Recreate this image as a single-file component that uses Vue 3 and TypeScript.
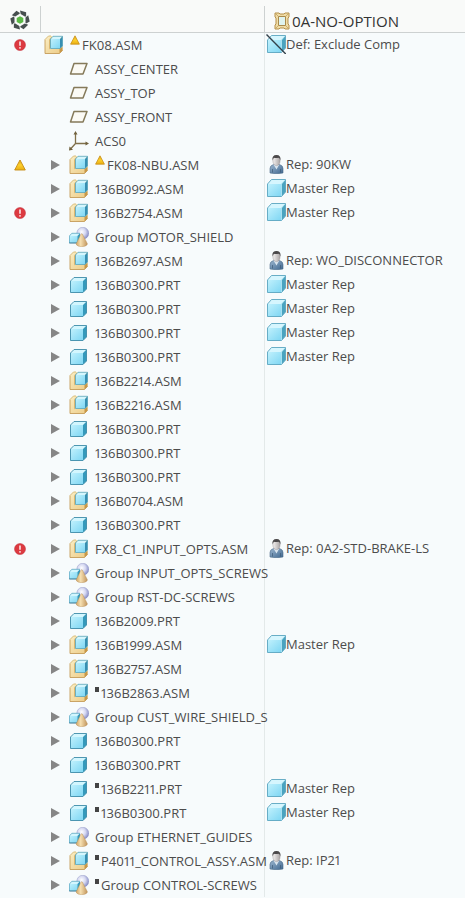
<script setup lang="ts">
import { reactive } from 'vue'

type Kind = 'asm' | 'part' | 'group' | 'plane' | 'csys'
type Status = 'error' | 'warning'
type Mark = 'warning' | 'square'
type RepKind = 'master' | 'user' | 'exclude'

interface Rep {
  kind: RepKind
  label: string
}

interface Item {
  id: number
  kind: Kind
  name: string
  root: boolean
  expandable: boolean
  open: boolean
  status?: Status
  mark?: Mark
  rep?: Rep
}

let nextId = 0
function item(kind: Kind, name: string, extra: Partial<Item> = {}): Item {
  const expandable = kind !== 'plane' && kind !== 'csys'
  return { id: nextId++, kind, name, root: false, expandable, open: false, ...extra }
}

const master: Rep = { kind: 'master', label: 'Master Rep' }
const user = (label: string): Rep => ({ kind: 'user', label: `Rep: ${label}` })

const items = reactive<Item[]>([
  item('asm', 'FK08.ASM', {
    root: true,
    expandable: false,
    status: 'error',
    mark: 'warning',
    rep: { kind: 'exclude', label: 'Def: Exclude Comp' },
  }),
  item('plane', 'ASSY_CENTER'),
  item('plane', 'ASSY_TOP'),
  item('plane', 'ASSY_FRONT'),
  item('csys', 'ACS0'),
  item('asm', 'FK08-NBU.ASM', { status: 'warning', mark: 'warning', rep: user('90KW') }),
  item('asm', '136B0992.ASM', { rep: master }),
  item('asm', '136B2754.ASM', { status: 'error', rep: master }),
  item('group', 'Group MOTOR_SHIELD'),
  item('asm', '136B2697.ASM', { rep: user('WO_DISCONNECTOR') }),
  item('part', '136B0300.PRT', { rep: master }),
  item('part', '136B0300.PRT', { rep: master }),
  item('part', '136B0300.PRT', { rep: master }),
  item('part', '136B0300.PRT', { rep: master }),
  item('asm', '136B2214.ASM'),
  item('asm', '136B2216.ASM'),
  item('part', '136B0300.PRT'),
  item('part', '136B0300.PRT'),
  item('part', '136B0300.PRT'),
  item('asm', '136B0704.ASM'),
  item('part', '136B0300.PRT'),
  item('asm', 'FX8_C1_INPUT_OPTS.ASM', { status: 'error', rep: user('0A2-STD-BRAKE-LS') }),
  item('group', 'Group INPUT_OPTS_SCREWS'),
  item('group', 'Group RST-DC-SCREWS'),
  item('part', '136B2009.PRT'),
  item('asm', '136B1999.ASM', { rep: master }),
  item('asm', '136B2757.ASM'),
  item('asm', '136B2863.ASM', { mark: 'square' }),
  item('group', 'Group CUST_WIRE_SHIELD_SCREWS'),
  item('part', '136B0300.PRT'),
  item('part', '136B0300.PRT'),
  item('part', '136B2211.PRT', { expandable: false, mark: 'square', rep: master }),
  item('part', '136B0300.PRT', { mark: 'square', rep: master }),
  item('group', 'Group ETHERNET_GUIDES'),
  item('asm', 'P4011_CONTROL_ASSY.ASM', { mark: 'square', rep: user('IP21') }),
  item('group', 'Group CONTROL-SCREWS', { mark: 'square' }),
])
</script>

<template>
  <main class="tree">
    <svg class="sprite" aria-hidden="true">
      <defs>
        <linearGradient id="ice" x1="0" y1="0" x2="1" y2="1">
          <stop offset="0" stop-color="#c0f1fd" />
          <stop offset="1" stop-color="#7ed6f3" />
        </linearGradient>
        <linearGradient id="sand" x1="0" y1="0" x2="1" y2="1">
          <stop offset="0" stop-color="#fbeec4" />
          <stop offset="1" stop-color="#eccb86" />
        </linearGradient>
        <linearGradient id="cone" x1="0" y1="0" x2="1" y2="0">
          <stop offset="0" stop-color="#cfa466" />
          <stop offset="0.4" stop-color="#f5dfb0" />
          <stop offset="1" stop-color="#c0935a" />
        </linearGradient>
        <radialGradient id="ball" cx="0.4" cy="0.4" r="0.65">
          <stop offset="0" stop-color="#ffffff" />
          <stop offset="0.5" stop-color="#d5d8f1" />
          <stop offset="1" stop-color="#8187c4" />
        </radialGradient>
        <linearGradient id="gold" x1="0" y1="0" x2="0" y2="1">
          <stop offset="0" stop-color="#e0a81c" />
          <stop offset="0.5" stop-color="#fdd02c" />
          <stop offset="1" stop-color="#e9ae12" />
        </linearGradient>
        <linearGradient id="coat" x1="0" y1="0" x2="1" y2="1">
          <stop offset="0" stop-color="#9bb6cf" />
          <stop offset="1" stop-color="#3f678f" />
        </linearGradient>
        <linearGradient id="face" x1="0" y1="0" x2="1" y2="0">
          <stop offset="0" stop-color="#f4f2f1" />
          <stop offset="1" stop-color="#aaa5a5" />
        </linearGradient>
      </defs>

      <symbol id="asm" viewBox="0 0 20 20">
        <path d="M1 4.500L4.500 1H18.500V15.500L15.500 18.500H1Z" fill="url(#sand)" />
        <path d="M15.500 18.500L18.500 15.500V12L15.500 14Z" fill="#c89848" />
        <path d="M1 4.500V18.500H15.500L18.500 15.500" fill="none" stroke="#c59c59" stroke-width="0.900" />
        <path d="M1 4.500L4.500 1H7" fill="none" stroke="#d9bd7b" stroke-width="1" />
        <path d="M5 4.500L8 1.500V11L5 14.500Z" fill="#dcb871" />
        <path d="M6.500 4L9 1.300H18.500L16 4Z" fill="#d5f6fd" />
        <path d="M6.500 4H16V13.500H6.500Z" fill="url(#ice)" />
        <path d="M16 4L18.500 1.300V11L16 13.500Z" fill="#368fb2" />
        <path d="M6.500 13.500V4L9 1.300H18.500V11L16 13.500Z" fill="none" stroke="#4a9fbd" stroke-width="0.700" />
      </symbol>

      <symbol id="part" viewBox="0 0 20 20">
        <path d="M1.500 6L5 2.500H17.500L14 6Z" fill="#d3f6fe" />
        <path d="M1.500 6H14V17.500H1.500Z" fill="url(#ice)" />
        <path d="M14 6L17.500 2.500V14L14 17.500Z" fill="#3499bb" />
        <path d="M1.500 6L5 2.500H17.500V14L14 17.500H1.500Z" fill="none" stroke="#3d8ba8" stroke-width="0.900" stroke-linejoin="round" />
      </symbol>

      <symbol id="group" viewBox="0 0 20 20">
        <circle cx="13.800" cy="6.200" r="6" fill="url(#ball)" stroke="#8990bf" stroke-width="0.400" />
        <path d="M0.300 9L2.800 6.300H11L8.500 9Z" fill="#d3f6fe" />
        <path d="M0.300 9H9V16H0.300Z" fill="url(#ice)" />
        <path d="M8.500 9L11 6.300V13L8.500 16Z" fill="#3499bb" />
        <path d="M0.400 16V9L2.800 6.300H11" fill="none" stroke="#4c9dbb" stroke-width="0.700" />
        <path d="M0.300 16H8" stroke="#34758f" stroke-width="1" />
        <path d="M12 7Q12.700 6.300 13.400 7L18.500 17Q17.500 19.700 12.800 19.700Q8 19.700 7 17Z" fill="url(#cone)" stroke="#b28b54" stroke-width="0.400" />
      </symbol>

      <symbol id="plane" viewBox="0 0 20 20">
        <path d="M5 4.500H18L14 15H1.500Z" fill="#fbfaf4" stroke="#857a5a" stroke-width="1.500" stroke-linejoin="round" />
      </symbol>

      <symbol id="csys" viewBox="0 0 20 20">
        <path d="M6.500 2V12.500H18M6.500 12.500L1.500 18" fill="none" stroke="#80704a" stroke-width="1.300" />
        <path d="M6.500 0L8.500 3.500H4.500ZM20 12.500L16.500 14.500V10.500ZM0 19.500L0.500 15.500L4 18.800Z" fill="#70613d" />
      </symbol>

      <symbol id="master" viewBox="0 0 20 20">
        <path d="M1.500 6L5.500 1.500H19.500L15.500 6Z" fill="#d6f6fe" />
        <path d="M1.500 6H15.500V18.500H1.500Z" fill="url(#ice)" />
        <path d="M15.500 6L19.500 1.500V14L15.500 18.500Z" fill="#4aa3bf" />
        <path d="M1.500 6L5.500 1.500H19.500V14L15.500 18.500H1.500Z" fill="none" stroke="#5aa5c0" stroke-width="0.900" stroke-linejoin="round" />
        <path d="M15.500 18V6L19 2" fill="none" stroke="#b7ebf8" stroke-width="0.700" />
      </symbol>

      <symbol id="exclude" viewBox="0 0 20 20">
        <use href="#master" width="20" height="20" />
        <path d="M0.500 0.500L19.800 20" stroke="#33414b" stroke-width="1.400" />
      </symbol>

      <symbol id="user" viewBox="0 0 20 20">
        <path d="M4 19V14.500Q4 11.500 7.500 10.500H13.500Q17 11.500 17 14.500V19Q10.500 20.500 4 19Z" fill="url(#coat)" stroke="#4a6a88" stroke-width="0.600" />
        <path d="M7.500 10.500L10.500 15.500L13.300 10.500Z" fill="#dbe6ef" />
        <path d="M6.500 15V18.500M14.500 15V18.500" stroke="#3d5a77" stroke-width="0.700" />
        <ellipse cx="10.500" cy="6.700" rx="3.600" ry="4.900" fill="url(#face)" stroke="#8a8485" stroke-width="0.400" />
        <path d="M6.500 6.500Q5.700 1 10.500 1Q15.200 1 14.400 6.500Q13.800 3.800 12.500 3.700Q9.500 4.300 8 3.700Q7 4.500 6.500 6.500Z" fill="#4b494a" />
      </symbol>

      <symbol id="error" viewBox="0 0 12 12">
        <circle cx="6" cy="6" r="5.500" fill="#dc3a41" stroke="#c22f38" stroke-width="0.500" />
        <path d="M6 2.500V6.700" stroke="#fff" stroke-width="1.400" />
        <circle cx="6" cy="8.900" r="0.800" fill="#fff" />
      </symbol>

      <symbol id="warning" viewBox="0 0 12 12">
        <path d="M6 1L11.300 11H0.700Z" fill="url(#gold)" stroke="#c58a10" stroke-width="0.900" stroke-linejoin="round" />
      </symbol>

      <symbol id="regen" viewBox="0 0 20 20">
        <g fill="#474f4f">
          <path v-for="n in 6" :key="n" :transform="`rotate(${n * 60 - 30} 10 10)`" d="M5.300 1.800L11.500 0.300L13.500 3.800L12.300 4.500L7.600 4.500Z" />
        </g>
        <path d="M10 6.200L13.300 8.100V11.900L10 13.800L6.700 11.900V8.100Z" fill="#5cb947" />
      </symbol>

      <symbol id="frame" viewBox="0 0 16 18">
        <path d="M1 1H5L6 2H10L11 1H15V5L14 6V12L15 13V17H11L10 16H6L5 17H1V13L2 12V6L1 5Z" fill="#f0dca6" stroke="#b48f49" stroke-width="1" />
        <path d="M4.500 4.500H11.500V13.500H4.500Z" fill="#dff3ef" stroke="#a98a4c" stroke-width="1" />
        <path d="M2 2L4.500 4.500M14 2L11.500 4.500M2 16L4.500 13.500M14 16L11.500 13.500" stroke="#b99550" stroke-width="0.700" />
      </symbol>
    </svg>

    <table>
      <colgroup>
        <col class="col-status" />
        <col class="col-name" />
        <col />
      </colgroup>
      <thead>
        <tr>
          <th scope="col" class="status" aria-label="Status">
            <svg class="icon"><use href="#regen" /></svg>
          </th>
          <th scope="col" aria-label="Model"></th>
          <th scope="col">
            <div class="option">
              <svg class="frame"><use href="#frame" /></svg>
              <span>0A-NO-OPTION</span>
            </div>
          </th>
        </tr>
      </thead>
      <tbody>
        <tr v-for="row in items" :key="row.id">
          <td class="status">
            <svg v-if="row.status" class="badge"><use :href="`#${row.status}`" /></svg>
          </td>
          <td class="name">
            <div class="node" :class="{ root: row.root }">
              <button
                v-if="row.expandable"
                type="button"
                class="toggle"
                :aria-label="`Expand ${row.name}`"
                :aria-expanded="row.open"
                @click="row.open = !row.open"
              >
                <svg viewBox="0 0 10 12"><path d="M1 1L10 6L1 11Z" fill="#868686" /></svg>
              </button>
              <span v-else-if="!row.root" class="toggle"></span>
              <svg class="icon"><use :href="`#${row.kind}`" /></svg>
              <span class="label">
                <svg v-if="row.mark === 'warning'" class="mark-warning"><use href="#warning" /></svg>
                <i v-else-if="row.mark === 'square'" class="mark-square"></i>
                <span>{{ row.name }}</span>
              </span>
            </div>
          </td>
          <td>
            <div v-if="row.rep" class="rep">
              <svg class="icon"><use :href="`#${row.rep.kind}`" /></svg>
              <span>{{ row.rep.label }}</span>
            </div>
          </td>
        </tr>
      </tbody>
    </table>
  </main>
</template>

<style>
body {
  margin: 0;
  background: #f7fbfc;
}
</style>

<style scoped>
.tree {
  min-height: 100vh;
  color: #4c4c4c;
  font: 13px/24px "Open Sans", "Noto Sans", sans-serif;
  font-variant-numeric: proportional-nums;
}
.sprite {
  position: absolute;
  width: 0;
  height: 0;
}
table {
  width: 100%;
  table-layout: fixed;
  border-collapse: separate;
  border-spacing: 0;
}
.col-status {
  width: 41px;
}
.col-name {
  width: 224px;
}
th,
td {
  box-sizing: border-box;
  height: 24px;
  padding: 0;
  overflow: hidden;
  font-weight: 400;
  text-align: left;
  vertical-align: top;
  white-space: nowrap;
}
th {
  height: 33px;
  padding-top: 10px;
  border-bottom: 1px solid #cdd1d1;
  background: linear-gradient(#cdd1d1, #cdd1d1) right bottom / 1px 26px no-repeat #f9faf9;
}
th:last-child {
  background-image: none;
}
td.name {
  overflow: visible;
  border-right: 1px solid #e3e9e9;
}
svg {
  display: block;
  flex: none;
}
.status svg {
  margin: 0 auto;
}
th.status,
td.status {
  padding-right: 2px;
}
td.status {
  vertical-align: middle;
}
.icon {
  width: 20px;
  height: 20px;
}
.badge {
  width: 12px;
  height: 12px;
}
.option {
  display: flex;
  align-items: center;
  gap: 2px;
  height: 22px;
  padding-left: 9px;
  color: #333;
  font-size: 15px;
}
.frame {
  width: 16px;
  height: 18px;
}
.node,
.rep {
  display: flex;
  align-items: center;
  height: 24px;
}
.node {
  margin-right: -4px;
  padding-left: 8px;
  overflow: hidden;
}
.node.root {
  padding-left: 3px;
}
.toggle {
  display: flex;
  flex: none;
  align-items: center;
  width: 20px;
  height: 24px;
  padding: 0;
  border: 0;
  background: none;
}
.toggle svg {
  width: 12px;
  height: 12px;
}
.label {
  display: flex;
  gap: 2px;
  padding-left: 6px;
}
.mark-warning {
  width: 10px;
  height: 10px;
  margin-top: 2px;
}
.mark-square {
  width: 4px;
  height: 5px;
  margin-top: 6px;
  background: #444;
}
.rep {
  height: 22px;
  padding-left: 1px;
}
</style>
